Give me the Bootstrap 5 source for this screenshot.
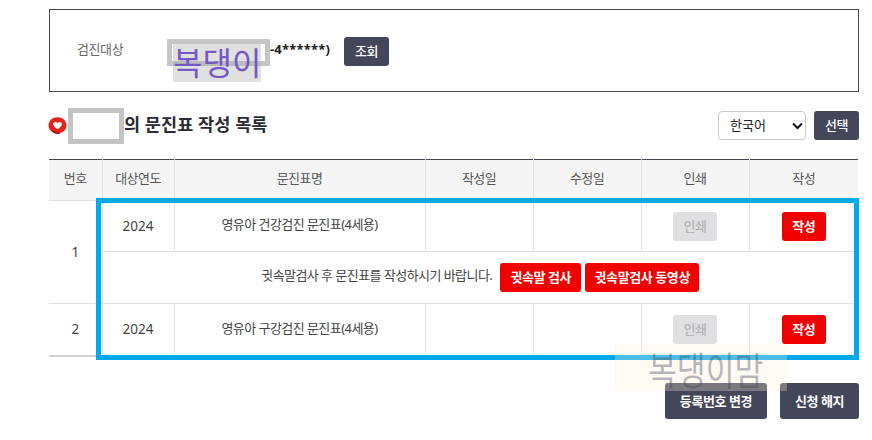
<!DOCTYPE html>
<html lang="ko">

<head>
    <meta charset="UTF-8">
    <meta name="viewport" content="width=device-width, initial-scale=1.0">
    <title>문진표 작성 목록</title>
    <link href="https://cdn.jsdelivr.net/npm/bootstrap@5.3.0/dist/css/bootstrap.min.css" rel="stylesheet">
    <style>
        html, body { height: 440px; overflow: hidden; }
        body { background: #fff; color: #333; font-family: "Noto Sans", "Noto Sans CJK KR", sans-serif; font-size: 13px; letter-spacing: -0.55px; }
        .page-wrap { position: relative; width: 872px; height: 440px; padding: 9px 13px 0 49px; }
        .search-box { height: 83px; border: 1px solid #44465a; padding: 2px 27px 0; }
        .search-label { width: 90px; color: #666; font-size: 13px; letter-spacing: -0.4px; margin-top: -3px; }
        .name-wrap { position: relative; width: 103px; height: 27px; border: 5px solid #c6c6c6; margin-top: 2px; }
        .name-sticker { position: absolute; left: 1px; top: 0; width: 88px; height: 38px; background: rgba(170, 170, 170, 0.36); color: #7459c6; font-size: 32px; line-height: 34px; text-align: center; letter-spacing: 0; white-space: nowrap; font-family: "Noto Sans CJK KR", sans-serif; }
        .masked-no { font-size: 13px; font-weight: 700; color: #222; width: 74px; letter-spacing: 0.2px; margin-top: -3px; }
        .btn-navy { background: #44465a; border: 0; border-radius: 3px; color: #fff; font-size: 13px; font-weight: 500; padding: 0; height: 29px; line-height: 29px; width: 45px; letter-spacing: -0.4px; }
        .btn-navy:hover { background: #44465a; color: #fff; }
        .title-row { height: 67px; }
        .heart-icon { width: 19px; height: 18px; margin: 1px 0 0 -1px; flex: none; }
        .name-mask { width: 56px; height: 36px; border: 5px solid #c4c4c4; flex: none; margin-left: 1px; }
        .title-text { font-size: 17.5px; font-weight: 700; color: #2b2b33; margin: 0 0 2px; letter-spacing: 0.1px; }
        .lang-select { width: 88px; height: 29px; padding: 0 0 0 11px; font-size: 13px; color: #222; border: 1px solid #c9c9c9; border-radius: 4px; background-color: #fff; background-size: 0; }
        .select-wrap { position: relative; }
        .select-wrap svg { position: absolute; right: 3px; top: 11px; pointer-events: none; }
        .list-table { width: 809px; table-layout: fixed; border-top: 1px solid #44465a; border-bottom: 2px solid #cfcfd4; margin: 0; }
        .list-table th, .list-table td { border: 1px solid #e2e2e2; border-top: 0; padding: 0; text-align: center; vertical-align: middle; font-size: 13px; color: #444; box-shadow: none; }
        .list-table th:first-child, .list-table td:first-child { border-left: 0; }
        .list-table th:last-child, .list-table td:last-child { border-right: 0; }
        .list-table th { background: #f5f5f5; font-weight: 400; height: 41px; color: #555; }
        .list-table td { height: 52px; }
        .list-table tbody tr:first-child > td:not([rowspan]) { height: 51px; }
        .list-table tr:last-child td { border-bottom: 0; }
        .list-table .num-cell { font-size: 13.5px; letter-spacing: 0; }
        .cell-text { display: inline-block; padding-bottom: 2px; }
        .msg-text { padding-bottom: 3px; }
        .btn-red, .btn-off, .btn-off:disabled { border: 0; border-radius: 3px; font-size: 13px; height: 29px; line-height: 29px; padding: 0; letter-spacing: -0.4px; }
        .btn-red { background: #f00000; color: #fff; font-weight: 700; }
        .btn-red:hover { background: #f00000; color: #fff; }
        .btn-off, .btn-off:disabled { background: #e0e0e2; color: #b4b4b4; font-weight: 500; width: 44px; opacity: 1; }
        .btn-w44 { width: 44px; }
        .btn-w81 { width: 81px; }
        .btn-w114 { width: 114px; }
        .foot-row { padding-top: 26px; width: 810px; gap: 13px; }
        .btn-lg-navy { height: 36px; line-height: 36px; font-weight: 700; }
        .btn-change { width: 102px; }
        .btn-cancel { width: 79px; }
        .blue-frame { position: absolute; left: 96px; top: 198px; width: 763px; height: 162px; border: 5px solid #00a8ec; pointer-events: none; }
        .water-mark { position: absolute; left: 615px; top: 344px; width: 172px; height: 47px; background: rgba(255, 240, 215, 0.3); pointer-events: none; }
        .water-text { position: absolute; left: 33px; top: 1px; color: rgba(60, 70, 90, 0.38); font-family: "Noto Sans CJK KR", sans-serif; font-size: 32px; line-height: 46px; letter-spacing: 0; white-space: nowrap; transform: scale(0.98, 1.2); transform-origin: left center; }
    </style>
</head>

<body>
    <div class="page-wrap">
        <div class="search-box d-flex align-items-center">
            <span class="search-label">검진대상</span>
            <div class="name-wrap"><div class="name-sticker">복댕이</div></div>
            <span class="masked-no">-4******)</span>
            <button class="btn btn-navy" type="button">조회</button>
        </div>

        <div class="title-row d-flex align-items-center justify-content-between">
            <div class="d-flex align-items-center">
                <svg class="heart-icon" viewBox="0 0 19 18">
                    <path d="M9.5 0.3 C14.5 0.3 18.5 3.8 18.5 8.5 C18.5 13 14.5 16.2 9.5 16.2 C4.5 16.2 0.5 13 0.5 8.5 C0.5 3.8 4.5 0.3 9.5 0.3 Z" fill="#e2231a"/>
                    <path d="M3 13 C5 16.6 9 17.6 13 16.4 L8.5 15 Z" fill="#9c1410"/>
                    <path d="M9.5 12.2 C7 10.6 5.2 9.2 5.2 7.3 C5.2 5.9 6.3 5 7.4 5 C8.3 5 9.1 5.5 9.5 6.2 C9.9 5.5 10.7 5 11.6 5 C12.7 5 13.8 5.9 13.8 7.3 C13.8 9.2 12 10.6 9.5 12.2 Z" fill="#fff"/>
                </svg>
                <div class="name-mask"></div>
                <h2 class="title-text">의 문진표 작성 목록</h2>
            </div>
            <div class="d-flex gap-2">
                <div class="select-wrap">
                    <select class="form-select lang-select">
                        <option>한국어</option>
                    </select>
                    <svg width="11" height="8" viewBox="0 0 11 8"><path d="M1 1.5 L5.5 6 L10 1.5" fill="none" stroke="#111" stroke-width="2"/></svg>
                </div>
                <button class="btn btn-navy" type="button">선택</button>
            </div>
        </div>

        <table class="table list-table">
            <colgroup>
                <col style="width: 53px">
                <col style="width: 72px">
                <col style="width: 251px">
                <col style="width: 108px">
                <col style="width: 108px">
                <col style="width: 108px">
                <col style="width: 109px">
            </colgroup>
            <thead>
                <tr>
                    <th><span class="cell-text">번호</span></th>
                    <th><span class="cell-text">대상연도</span></th>
                    <th><span class="cell-text">문진표명</span></th>
                    <th><span class="cell-text">작성일</span></th>
                    <th><span class="cell-text">수정일</span></th>
                    <th><span class="cell-text">인쇄</span></th>
                    <th><span class="cell-text">작성</span></th>
                </tr>
            </thead>
            <tbody>
                <tr>
                    <td rowspan="2" class="num-cell">1</td>
                    <td class="num-cell">2024</td>
                    <td><span class="cell-text">영유아 건강검진 문진표(4세용)</span></td>
                    <td></td>
                    <td></td>
                    <td><button class="btn btn-off" type="button" disabled>인쇄</button></td>
                    <td><button class="btn btn-red btn-w44" type="button">작성</button></td>
                </tr>
                <tr>
                    <td colspan="6">
                        <div class="d-flex align-items-center justify-content-center">
                            <span class="me-2 msg-text">귓속말검사 후 문진표를 작성하시기 바랍니다.</span>
                            <button class="btn btn-red btn-w81 me-1" type="button">귓속말 검사</button>
                            <button class="btn btn-red btn-w114" type="button">귓속말검사 동영상</button>
                        </div>
                    </td>
                </tr>
                <tr>
                    <td class="num-cell">2</td>
                    <td class="num-cell">2024</td>
                    <td><span class="cell-text">영유아 구강검진 문진표(4세용)</span></td>
                    <td></td>
                    <td></td>
                    <td><button class="btn btn-off" type="button" disabled>인쇄</button></td>
                    <td><button class="btn btn-red btn-w44" type="button">작성</button></td>
                </tr>
            </tbody>
        </table>

        <div class="foot-row d-flex justify-content-end">
            <button class="btn btn-navy btn-lg-navy btn-change" type="button">등록번호 변경</button>
            <button class="btn btn-navy btn-lg-navy btn-cancel" type="button">신청 해지</button>
        </div>

        <div class="blue-frame"></div>
        <div class="water-mark"><span class="water-text">복댕이맘</span></div>
    </div>
    <script src="https://cdn.jsdelivr.net/npm/bootstrap@5.3.0/dist/js/bootstrap.bundle.min.js"></script>
</body>

</html>
